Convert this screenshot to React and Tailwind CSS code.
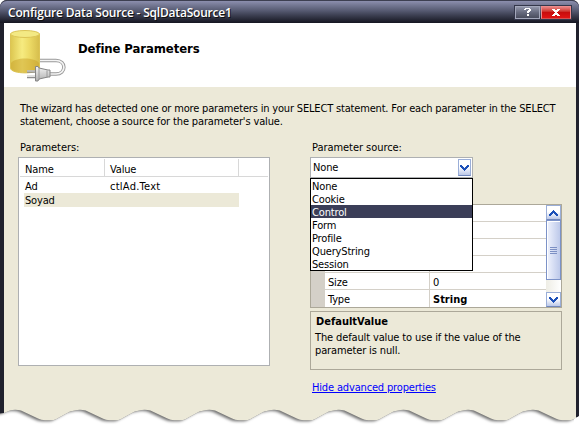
const sources = ['None', 'Cookie', 'Control', 'Form', 'Profile', 'QueryString', 'Session'];
const properties = [['', ''], ['', ''], ['', ''], ['', ''], ['Size', '0'], ['Type', 'String']];

function Chevron({ up }) {
  return (
    <svg width="9" height="6" viewBox="0 0 9 6" shapeRendering="crispEdges" className={up ? 'rotate-180' : ''}>
      <path d="M0 0h2v1h1v1h1v1h1v-1h1v-1h1v-1h2v2h-1v1h-1v1h-1v1h-1v1h-1v-1h-1v-1h-1v-1h-1v-1h-1z" fill="#1c50b8" />
    </svg>
  );
}

function ArrowButton({ up, className }) {
  return (
    <div className={`flex shrink-0 items-center justify-center border border-[#9aaed8] border-b-[#7188bd] bg-linear-to-b from-white from-45% to-[#bcc8e8] ${className}`}>
      <Chevron up={up} />
    </div>
  );
}

function DataSourceIcon() {
  return (
    <svg width="58" height="56" viewBox="0 0 58 56" className="ml-[5px] mt-[6px] shrink-0">
      <defs>
        <linearGradient id="body" x1="0" x2="1">
          <stop offset="0" stopColor="#dcc650" />
          <stop offset=".4" stopColor="#f6eb80" />
          <stop offset=".65" stopColor="#eddb66" />
          <stop offset="1" stopColor="#d6bd4c" />
        </linearGradient>
        <linearGradient id="plug" x1="0" x2="0" y1="0" y2="1">
          <stop offset="0" stopColor="#f4f4f4" />
          <stop offset="1" stopColor="#b0b0b0" />
        </linearGradient>
      </defs>
      <path d="M1.500 5v34c0 6.500 29 6.500 29 0v-34z" fill="url(#body)" stroke="#dcc456" />
      <path d="M2 34c4-6 24-6 28 0v5c-1 6-27 6-28 0z" fill="#c9a229" opacity=".5" />
      <ellipse cx="16" cy="5" rx="14.500" ry="3.500" fill="#f3e984" stroke="#dcc456" />
      <path d="M31 31.500h16c10.500 0 10.500 13.500 0 13.500h-7" fill="none" stroke="#999" strokeWidth="3.500" />
      <path d="M31 31.500h16c10.500 0 10.500 13.500 0 13.500h-7" fill="none" stroke="#f4f4f4" strokeWidth="1.700" />
      <path d="M18 42.500h9M18 48h9" stroke="#8c8c8c" strokeWidth="2.500" />
      <path d="M18 42h8M18 47.500h8" stroke="#e0e0e0" />
      <path d="M26.500 37.500h2.500l1 1.500l9 2h2v7h-2l-9 2l-1 2h-2.500z" fill="url(#plug)" stroke="#858585" />
      <path d="M30 39v12M38 41.500v7" stroke="#9a9a9a" />
    </svg>
  );
}

function wavePath() {
  let d = 'M-10 415L4 413L10 410.500';
  for (let i = 0; i < 9; i++) {
    const x = 10 + i * 64.7;
    d += `L${x} 410.500Q${x + 5} 409 ${x + 11} 410.500L${x + 28} 418.500Q${x + 31} 420.200 ${x + 35} 420.200L${x + 43} 420.200Q${x + 46} 419.800 ${x + 49} 417.500L${x + 60} 411.500`;
  }
  return d + 'L600 450H-10Z';
}

function TornEdge() {
  return (
    <svg width="579" height="25" viewBox="0 400 579 25" className="absolute bottom-0 left-0">
      <defs>
        <filter id="soft" x="-5%" y="-50%" width="110%" height="200%"><feGaussianBlur stdDeviation="1.5" /></filter>
        <clipPath id="torn"><path d={wavePath()} /></clipPath>
      </defs>
      <g clipPath="url(#torn)">
        <rect y="400" width="579" height="25" fill="#6e6e6e" />
        <path d={wavePath()} fill="#fff" transform="translate(-3 1)" filter="url(#soft)" />
        <rect x="574" y="400" width="5" height="25" fill="#fff" />
      </g>
    </svg>
  );
}

function TitleBar() {
  return (
    <div className="flex h-[23px] shrink-0 items-center rounded-t-[7px] border-t border-[#3d3f51] bg-linear-to-b from-[#8c8fae] via-[#555970] via-45% to-[#151621] pl-2 pr-[7px]">
      <span className="whitespace-nowrap text-[12px] font-semibold tracking-[-0.2px] text-white [font-family:'Open_Sans','Noto_Sans',sans-serif] [text-shadow:1px_1px_0_#111]">Configure Data Source - SqlDataSource1</span>
      <div className="ml-auto flex h-[15px] border border-[#34374b]">
        <div className="flex w-[25px] items-center justify-center border border-[#a3a7bb] bg-linear-to-b from-[#9296aa] via-[#666a7e] to-[#4a4d5e]">
          <svg width="7" height="8" viewBox="0 0 7 8" shapeRendering="crispEdges">
            <path d="M1 0h5v1h1v2h-1v1h-1v1h-2v-2h1v-1h1v-1h-3v1h-2v-1h1zM3 6h2v2h-2z" fill="#fff" />
          </svg>
        </div>
        <div className="ml-px flex w-[30px] items-center justify-center border border-[#ec8b8b] border-b-[#d65050] bg-linear-to-b from-[#e68181] via-[#c80d0d] via-50% to-[#e01515]">
          <svg width="8" height="7" viewBox="0 0 8 7" shapeRendering="crispEdges">
            <path d="M0 0h3v1h2v-1h3v1h-1v1h-1v1h-1v1h1v1h1v1h1v1h-3v-1h-2v1h-3v-1h1v-1h1v-1h1v-1h-1v-1h-1v-1h-1z" fill="#fff" />
          </svg>
        </div>
      </div>
    </div>
  );
}

function ParameterList() {
  return (
    <div className="mt-[3px] h-[209px] w-[252px] border border-[#aeb0b2] bg-white p-px">
      <div className="flex h-[18px] items-center border-b border-[#d8d8d8]">
        <div className="flex h-full w-[85px] items-center border-r border-[#d8d8d8] pl-[5px] pt-[3px]">Name</div>
        <div className="flex h-full w-[134px] items-center border-r border-[#d8d8d8] pl-[5px] pt-[3px]">Value</div>
      </div>
      <div className="ml-1 mt-[2px] flex h-[14px] w-[215px] items-center">
        <span className="w-[86px] pl-px">Ad</span>
        <span className="tracking-[0.25px]">ctlAd.Text</span>
      </div>
      <div className="ml-1 flex h-[14px] w-[215px] items-center bg-[#ece9d8] pl-px">Soyad</div>
    </div>
  );
}

function SourceSelect() {
  return (
    <div className="relative mt-[3px] flex h-[21px] w-[163px] items-center justify-between border border-[#aeb0b2] bg-white pl-[2px] pr-px">
      <span>None</span>
      <ArrowButton className="h-[17px] w-[13px]" />
      <ul className="absolute -left-px top-[20px] z-10 w-[163px] border border-black bg-white">
        {sources.map((s) => (
          <li key={s} className={`h-[13px] pl-px leading-[15px] ${s === 'Control' ? 'bg-[#3b3e58] text-white' : ''}`}>{s}</li>
        ))}
      </ul>
    </div>
  );
}

function PropertyGrid() {
  return (
    <div className="mt-[26px] flex h-[104px] w-[252px] border border-[#aca899] bg-white">
      <div className="w-[14px] bg-[#d4d0c8]" />
      <div className="flex-1">
        {properties.map(([name, value], i) => (
          <div key={i} className={`flex h-[17px] items-center ${i < 5 ? 'border-b border-[#d4d0c8]' : ''}`}>
            <span className="flex h-full w-[105px] items-center border-r border-[#d4d0c8] pl-[3px] pt-[2px]">{name}</span>
            <span className={`pl-[3px] pt-[2px] ${value === 'String' ? 'font-bold tracking-[0px]' : ''}`}>{value}</span>
          </div>
        ))}
      </div>
      <div className="flex w-[15px] flex-col bg-linear-to-r from-[#eeede5] to-white">
        <ArrowButton up className="h-[15px]" />
        <div className="flex h-[60px] flex-col items-center justify-center gap-px border border-[#7c92c8] bg-linear-to-r from-[#f0f3fd] to-[#bdc9ea] shadow-[inset_1px_1px_0_#fff]">
          <i className="h-px w-[7px] bg-[#7d90c4]" />
          <i className="h-px w-[7px] bg-[#7d90c4]" />
          <i className="h-px w-[7px] bg-[#7d90c4]" />
          <i className="h-px w-[7px] bg-[#7d90c4]" />
        </div>
        <ArrowButton className="mt-auto h-[15px]" />
      </div>
    </div>
  );
}

export default function App() {
  return (
    <div className="relative h-[425px] w-[579px] overflow-hidden bg-white text-[11px] leading-[13px] tracking-[-0.16px] text-black [font-family:'DejaVu_Sans_Condensed','DejaVu_Sans',sans-serif]">
      <div className="flex h-full flex-col rounded-t-[7px] bg-[#20212d]">
        <TitleBar />
        <div className="ml-1 mr-[3px] flex h-[64px] shrink-0 bg-white">
          <DataSourceIcon />
          <h1 className="ml-[11px] mt-[18px] text-[13px] font-bold leading-4 tracking-[-0.1px]">Define Parameters</h1>
        </div>
        <div className="ml-1 mr-[3px] flex-1 bg-[#ece9d8] pl-[14px] pt-[15px]">
          <p className="whitespace-nowrap pl-[2px] tracking-[-0.175px]">
            <span className="block">The wizard has detected one or more parameters in your SELECT statement. For each parameter in the SELECT</span>
            <span className="block tracking-[-0.14px]">statement, choose a source for the parameter's value.</span>
          </p>
          <div className="mt-[13px] flex gap-10">
            <section>
              <h2 className="pl-[2px] tracking-[-0.05px]">Parameters:</h2>
              <ParameterList />
            </section>
            <section>
              <h2 className="pl-[2px] tracking-[-0.05px]">Parameter source:</h2>
              <SourceSelect />
              <PropertyGrid />
              <div className="mt-[3px] h-[59px] w-[252px] border border-[#aca899] pl-1 pt-[3px]">
                <h3 className="pl-px font-bold tracking-[0px]">DefaultValue</h3>
                <p className="mt-[3px] whitespace-nowrap tracking-[-0.13px]">The default value to use if the value of the<br />parameter is null.</p>
              </div>
              <a className="ml-[2px] mt-[11px] block w-fit text-[#0000ff] underline">Hide advanced properties</a>
            </section>
          </div>
        </div>
      </div>
      <TornEdge />
    </div>
  );
}
